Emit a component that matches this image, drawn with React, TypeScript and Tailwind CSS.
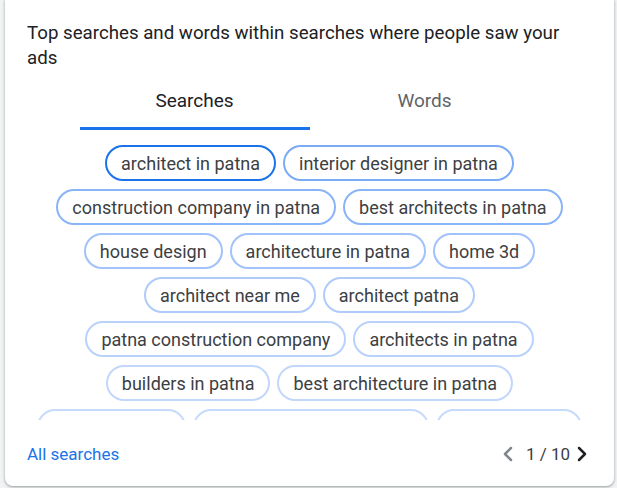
import { ChevronLeft, ChevronRight } from 'lucide-react'

const rows: { label: string; tone: string }[][] = [
  [
    { label: 'architect in patna', tone: 'border-[#1a73e8]' },
    { label: 'interior designer in patna', tone: 'border-[#7baaf7]' },
  ],
  [
    { label: 'construction company in patna', tone: 'border-[#8ab4f8]' },
    { label: 'best architects in patna', tone: 'border-[#8ab4f8]' },
  ],
  [
    { label: 'house design', tone: 'border-[#a1c2fa]' },
    { label: 'architecture in patna', tone: 'border-[#a1c2fa]' },
    { label: 'home 3d', tone: 'border-[#a1c2fa]' },
  ],
  [
    { label: 'architect near me', tone: 'border-[#aecbfa]' },
    { label: 'architect patna', tone: 'border-[#aecbfa]' },
  ],
  [
    { label: 'patna construction company', tone: 'border-[#b9d2fb]' },
    { label: 'architects in patna', tone: 'border-[#b9d2fb]' },
  ],
  [
    { label: 'builders in patna', tone: 'border-[#c2d7fb]' },
    { label: 'best architecture in patna', tone: 'border-[#c2d7fb]' },
  ],
  [
    { label: 'house builders', tone: 'border-[#c6dafc]' },
    { label: 'top 10 architects in patna', tone: 'border-[#c6dafc]' },
    { label: 'interior design', tone: 'border-[#c6dafc]' },
  ],
]

export default function App() {
  return (
    <div className="w-full h-[488px] bg-[#f1f3f4] pl-[5px] pr-[3px] pb-[2px] font-['Roboto',sans-serif]">
      <div className="h-full bg-white rounded-b-lg shadow-[0_1px_2px_rgba(60,64,67,0.3),0_1px_3px_1px_rgba(60,64,67,0.15)] flex flex-col pt-[21px]">
        <h2 className="px-[22px] text-[18.7px] leading-[25px] text-[#202124]">
          Top searches and words within searches where people saw your ads
        </h2>

        <div className="flex justify-center mt-[18px]">
          <div className="w-[230px] flex flex-col items-center">
            <span className="text-[19px] leading-6 text-[#202124]">Searches</span>
            <div className="mt-[14px] h-[3px] w-full bg-[#1a73e8]" />
          </div>
          <div className="w-[230px] flex flex-col items-center">
            <span className="text-[19px] leading-6 text-[#5f6368]">Words</span>
            <div className="mt-[14px] h-[3px] w-full" />
          </div>
        </div>

        <div className="mt-[15px] h-[275px] overflow-hidden flex flex-col items-center gap-[8px]">
          {rows.map((row, i) => (
            <div key={i} className="flex gap-[7px] justify-center">
              {row.map((chip) => (
                <span
                  key={chip.label}
                  className={`h-[36px] px-[14px] rounded-full border-2 ${chip.tone} flex items-center text-[18px] text-[#3c4043] whitespace-nowrap`}
                >
                  {chip.label}
                </span>
              ))}
            </div>
          ))}
        </div>

        <div className="mt-auto mb-[20px] pl-[22px] pr-[20px] flex items-center justify-between">
          <a className="text-[17px] leading-6 text-[#1a73e8]">All searches</a>
          <div className="flex items-center text-[17px] leading-6 text-[#3c4043]">
            <ChevronLeft className="w-6 h-6 text-[#80868b]" strokeWidth={2.5} />
            <span className="ml-[6px]">1 / 10</span>
            <ChevronRight className="w-6 h-6 text-[#202124]" strokeWidth={2.5} />
          </div>
        </div>
      </div>
    </div>
  )
}
